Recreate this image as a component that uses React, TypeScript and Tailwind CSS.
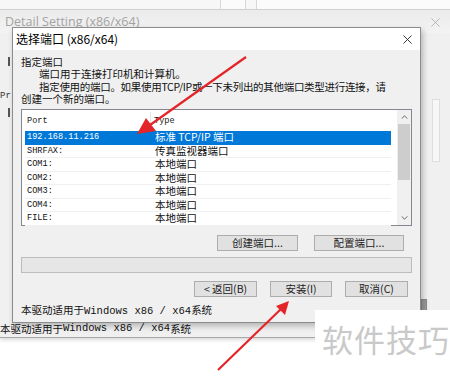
import React from "react";

const ports = [
  { port: "192.168.11.216", type: "标准 TCP/IP 端口", selected: true },
  { port: "SHRFAX:", type: "传真监视器端口" },
  { port: "COM1:", type: "本地端口" },
  { port: "COM2:", type: "本地端口" },
  { port: "COM3:", type: "本地端口" },
  { port: "COM4:", type: "本地端口" },
  { port: "FILE:", type: "本地端口" },
];

const cjk = "font-['Noto_Sans_CJK_SC',sans-serif]";
const mono = "font-['Liberation_Mono','Noto_Sans_CJK_SC',monospace]";

function WinButton({ label, className }: { label: string; className: string }) {
  return (
    <div
      className={`flex h-[16px] items-center justify-center border border-[#adadad] bg-[#e1e1e1] text-[10.5px] leading-none text-[#222] ${className}`}
    >
      {label}
    </div>
  );
}

function CloseIcon({ className }: { className: string }) {
  return (
    <svg viewBox="0 0 10 10" className={className} fill="none" stroke="currentColor" strokeWidth="1">
      <path d="M0.5 0.5 L9.5 9.5 M9.5 0.5 L0.5 9.5" />
    </svg>
  );
}

export default function App() {
  return (
    <div className={`relative h-[378px] w-[450px] overflow-hidden bg-white ${cjk}`}>
      {/* top strip of the window behind */}
      <div className="flex h-[10px] border-b border-[#d4d4d4] bg-[#f7f7f7]">
        <div className="w-[220px]" />
        <div className="w-[26px] border-x border-[#d8d8d8] bg-[#fbfbfb]" />
        <div className="w-[10px]" />
        <div className="flex-1 border-l border-[#d8d8d8] bg-[#fbfbfb]" />
      </div>

      {/* outer Detail Setting window */}
      <div className="flex h-[328px] flex-col border-b border-[#a8a8a8] bg-[#f0f0f0] shadow-[0_2px_4px_rgba(0,0,0,0.15)]">
        <div className="flex h-[23px] items-center justify-between bg-gradient-to-b from-[#ebebeb] to-[#f3f3f3] pl-[5px] pr-[10px] pt-[2px]">
          <span className="font-['Open_Sans',sans-serif] text-[12.5px] text-[#a3a3a3]">
            Detail Setting (x86/x64)
          </span>
          <CloseIcon className="h-[9px] w-[9px] text-[#b0b0b0]" />
        </div>
        <div className="flex flex-1">
          <div className="flex w-[12px] flex-col">
            <div className="mt-[24px] ml-[8px] h-[9px] w-[2px] bg-[#555]" />
            <div className={`mt-[26px] text-[9px] leading-none text-[#333] ${mono}`}>Pr</div>
            <div className="mt-[7px] ml-[8px] h-[9px] w-[2px] bg-[#555]" />
          </div>
          <div className="flex-1" />
          <div className="flex w-[29px] flex-col">
            <div className="mt-[66px] ml-[11px] h-[63px] w-[8px] border border-[#dedede] bg-[#f7f7f7]" />
            <div className="mt-[137px] h-[18px] w-[6px] border border-[#8a8a8a] bg-[#9a9a9a]" />
          </div>
        </div>
        <div className="flex h-[17px] items-center text-[10.5px] text-[#111]">
          本驱动适用于<span className={mono}>Windows x86 / x64</span>系统
        </div>
      </div>

      {/* inner port selection dialog */}
      <div className="absolute left-[12px] top-[27px] flex h-[296px] w-[409px] flex-col border border-[#8c8c8c] bg-[#f0f0f0] shadow-[2px_3px_6px_rgba(0,0,0,0.25)]">
        <div className="flex h-[22px] shrink-0 items-center justify-between bg-white pl-[3px] pr-[8px]">
          <span className="text-[12px] text-black">选择端口 (x86/x64)</span>
          <CloseIcon className="h-[9px] w-[9px] text-[#222]" />
        </div>
        <div className="flex flex-1 flex-col px-[8px] pt-[6px] text-[10.5px] text-[#111]">
          <div className="shrink-0 whitespace-nowrap">
            <div className="h-[12.3px] leading-[12.3px]">指定端口</div>
            <div className="h-[12.3px] pl-[18px] leading-[12.3px]">端口用于连接打印机和计算机。</div>
            <div className="h-[12.3px] pl-[18px] leading-[12.3px] tracking-[-0.3px]">
              指定使用的端口。如果使用TCP/IP或一下未列出的其他端口类型进行连接，请
            </div>
            <div className="h-[12.3px] leading-[12.3px]">创建一个新的端口。</div>
          </div>

          <div className="mt-[4px] flex h-[117px] w-[391px] shrink-0 border border-[#828790] bg-white">
            <div className="flex flex-1 flex-col">
              <div className={`flex h-[21px] shrink-0 items-center pt-[2px] text-[8.6px] text-[#222] ${mono}`}>
                <div className="flex h-full w-[129px] items-center border-r border-[#e5e5e5] pl-[5px]">Port</div>
                <div className="pl-[3px]">Type</div>
              </div>
              {ports.map((p) => (
                <div
                  key={p.port}
                  className={`ml-[3px] mr-[6px] flex h-[13.5px] shrink-0 items-center border-b ${
                    p.selected ? "border-[#0078d7] bg-[#0078d7] text-white" : "border-[#f0f0f0] text-[#111]"
                  }`}
                >
                  <div className={`w-[130px] pl-[2px] text-[8.6px] ${mono}`}>{p.port}</div>
                  <div className="text-[10.5px] leading-none">{p.type}</div>
                </div>
              ))}
            </div>
            <div className="flex w-[14px] flex-col items-center bg-[#f0f0f0]">
              <svg viewBox="0 0 8 5" className="mt-[5px] h-[4px] w-[7px]" fill="none" stroke="#606060" strokeWidth="1.2">
                <path d="M0.5 4.5 L4 1 L7.5 4.5" />
              </svg>
              <div className="mt-[5px] h-[56px] w-[12px] bg-[#cdcdcd]" />
              <div className="flex-1" />
              <svg viewBox="0 0 8 5" className="mb-[5px] h-[4px] w-[7px]" fill="none" stroke="#606060" strokeWidth="1.2">
                <path d="M0.5 0.5 L4 4 L7.5 0.5" />
              </svg>
            </div>
          </div>

          <div className="mt-[9px] flex justify-end gap-[16px] pr-[8px]">
            <WinButton label="创建端口..." className="w-[81px]" />
            <WinButton label="配置端口..." className="w-[90px]" />
          </div>

          <div className="mt-[6px] h-[16px] w-[391px] shrink-0 border border-[#bcbcbc] bg-[#e6e6e6]" />

          <div className="mt-[8px] flex justify-end gap-[13px] pr-[4px]">
            <WinButton label="< 返回(B)" className="w-[63px]" />
            <WinButton label="安装(I)" className="w-[62px]" />
            <WinButton label="取消(C)" className="w-[63px]" />
          </div>

          <div className="mt-[5px] whitespace-nowrap">
            本驱动适用于<span className={mono}>Windows x86 / x64</span>系统
          </div>
        </div>
      </div>

      {/* watermark */}
      <div className="absolute left-[315px] top-[310px] flex h-[68px] w-[135px] items-start bg-white pl-[7px] pt-[13px]">
        <span className="text-[31px] leading-none tracking-[1px] text-[#c9c9c9]">软件技巧</span>
      </div>

      {/* red annotation arrows */}
      <svg className="absolute left-0 top-0 h-[378px] w-[450px]" viewBox="0 0 450 378">
        <line x1="246" y1="57" x2="150" y2="125" stroke="#e3252a" strokeWidth="2.2" />
        <polygon points="137,134 146,118 156,131" fill="#e3252a" />
        <line x1="218" y1="370" x2="281" y2="309" stroke="#e3252a" strokeWidth="2.2" />
        <polygon points="289,301 276,306 285,315" fill="#e3252a" />
      </svg>
    </div>
  );
}
